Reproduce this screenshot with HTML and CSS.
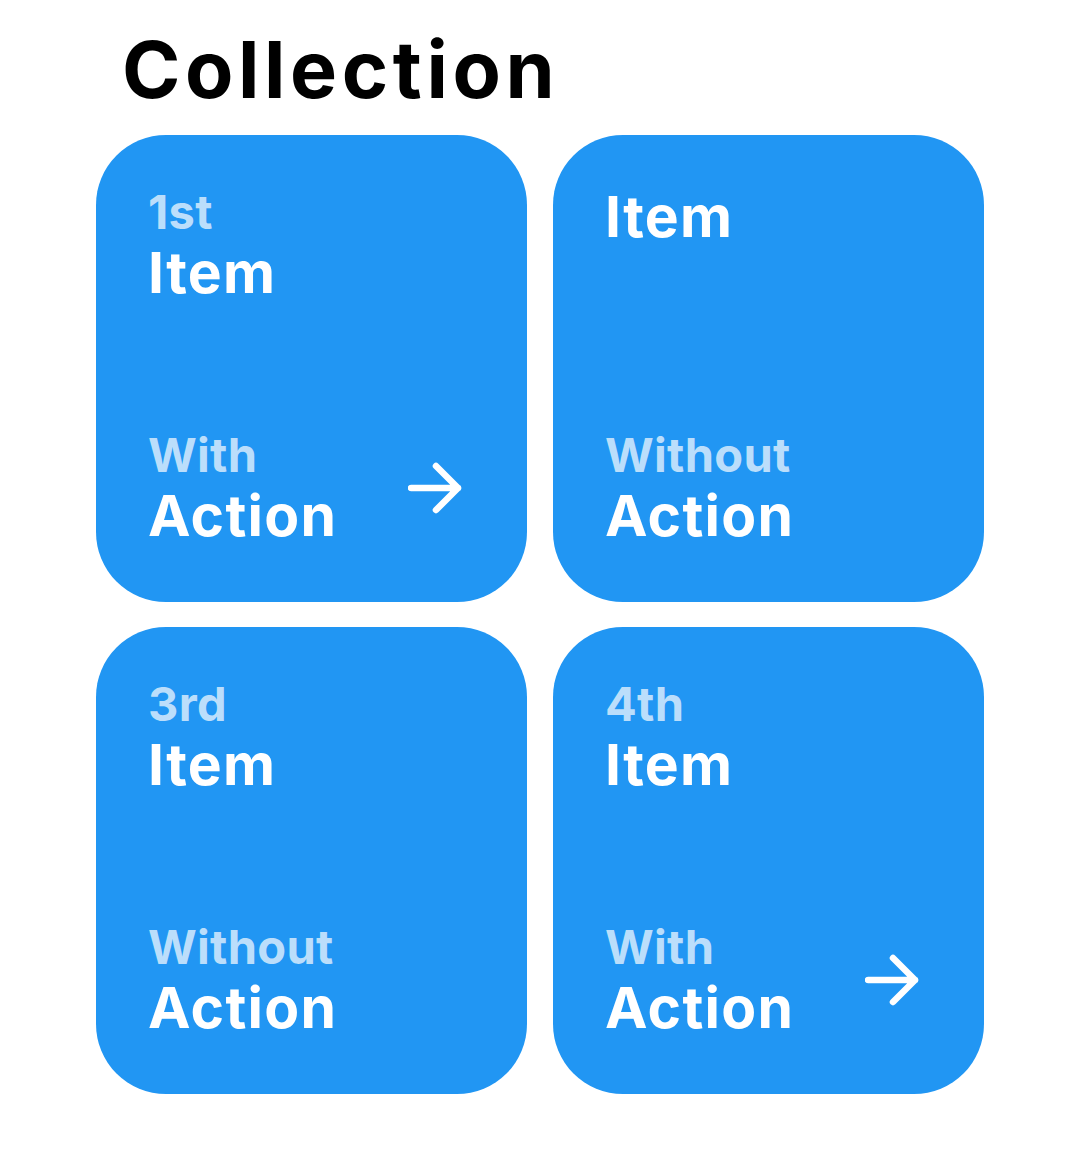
FILE: index.html
```html
<!DOCTYPE html>
<html lang="en">
<head>
<meta charset="utf-8">
<title>Collection</title>
<link rel="stylesheet" href="styles.css">
</head>
<body>
<main class="page">
  <h1 class="title">Collection</h1>
  <div class="grid">
    <div class="card">
      <div class="block">
        <div class="sub">1st</div>
        <div class="main">Item</div>
      </div>
      <div class="bottom">
        <div class="block">
          <div class="sub">With</div>
          <div class="main">Action</div>
        </div>
        <svg class="arrow" viewBox="0 0 54 52" width="54" height="52" aria-hidden="true">
          <path d="M3 26 H50 M28 4 L50 26 L28 48" fill="none" stroke="#fff" stroke-width="6.5" stroke-linecap="round" stroke-linejoin="round"/>
        </svg>
      </div>
    </div>
    <div class="card">
      <div class="block">
        <div class="main">Item</div>
      </div>
      <div class="bottom">
        <div class="block">
          <div class="sub">Without</div>
          <div class="main">Action</div>
        </div>
      </div>
    </div>
    <div class="card">
      <div class="block">
        <div class="sub">3rd</div>
        <div class="main">Item</div>
      </div>
      <div class="bottom">
        <div class="block">
          <div class="sub">Without</div>
          <div class="main">Action</div>
        </div>
      </div>
    </div>
    <div class="card">
      <div class="block">
        <div class="sub">4th</div>
        <div class="main">Item</div>
      </div>
      <div class="bottom">
        <div class="block">
          <div class="sub">With</div>
          <div class="main">Action</div>
        </div>
        <svg class="arrow" viewBox="0 0 54 52" width="54" height="52" aria-hidden="true">
          <path d="M3 26 H50 M28 4 L50 26 L28 48" fill="none" stroke="#fff" stroke-width="6.5" stroke-linecap="round" stroke-linejoin="round"/>
        </svg>
      </div>
    </div>
  </div>
</main>
</body>
</html>
```

FILE: styles.css
```css
html, body {
  margin: 0;
  padding: 0;
  background: #ffffff;
}

body {
  font-family: Inter, "Noto Sans", "Liberation Sans", sans-serif;
  color: #000;
}

.page {
  padding: 21px 0 0 96px;
}

.title {
  margin: 0 0 0 26px;
  font-size: 79px;
  line-height: 96px;
  font-weight: 700;
  letter-spacing: 4.6px;
}

.grid {
  margin-top: 18px;
  display: grid;
  grid-template-columns: 431px 431px;
  grid-auto-rows: 467px;
  column-gap: 26px;
  row-gap: 25px;
}

.card {
  background: #2196f3;
  border-radius: 70px;
  padding: 49px 53px 53px 52px;
  display: flex;
  flex-direction: column;
  justify-content: space-between;
  box-sizing: border-box;
  color: #ffffff;
}

.block {
  display: flex;
  flex-direction: column;
}

.sub {
  font-size: 47px;
  line-height: 56px;
  font-weight: 700;
  color: #bbdefb;
  letter-spacing: 0.3px;
}

.main {
  font-size: 57px;
  line-height: 66px;
  font-weight: 700;
  color: #ffffff;
  letter-spacing: 1.3px;
}

.bottom {
  display: flex;
  align-items: center;
  justify-content: space-between;
}

.arrow {
  margin-right: 12px;
  flex: none;
}
```
